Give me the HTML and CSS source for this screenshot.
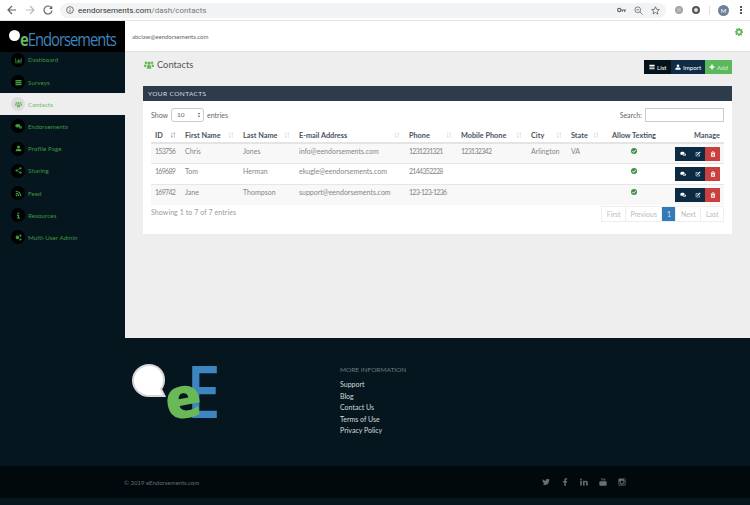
FILE: index.html
```html
<!DOCTYPE html>
<html lang="en">
<head>
    <meta charset="UTF-8">
    <meta name="viewport" content="width=device-width, initial-scale=1.0">
    <title>Contacts</title>
    <link rel="stylesheet" href="styles.css">
</head>
<body>

    <svg class="sprite" xmlns="http://www.w3.org/2000/svg">
        <symbol id="i-chart" viewBox="0 0 16 16"><path d="M1 2h1.500v11H15v1.500H1zM4 8h2v4H4zM7 5h2v7H7zM10 7h2v5h-2zM13 3h2v9h-2z"/></symbol>
        <symbol id="i-list" viewBox="0 0 16 16"><path d="M1 2h14v3H1zM1 6.500h14v3H1zM1 11h14v3H1z"/></symbol>
        <symbol id="i-users" viewBox="0 0 16 16"><circle cx="8" cy="5" r="2.600"/><circle cx="3" cy="4.500" r="2"/><circle cx="13" cy="4.500" r="2"/><path d="M4.500 14V10.500c0-1.700 1.200-2.500 3.500-2.500s3.500.8 3.500 2.500V14zM0 11V9c0-1.300 1-2 3-2 .5 0 .9 0 1.300.2-.7.600-1 1.500-1 2.800v1zM16 11V9c0-1.300-1-2-3-2-.5 0-.9 0-1.300.2.700.6 1 1.500 1 2.800v1z"/></symbol>
        <symbol id="i-comments" viewBox="0 0 16 16"><path d="M6.500 2C3 2 .5 3.800.5 6c0 1.200.7 2.200 1.900 3L1.500 11l2.700-1.300c.7.200 1.500.3 2.300.3 3.500 0 6-1.800 6-4s-2.500-4-6-4z"/><path d="M13.500 6.500c0 2.500-2.600 4.400-6 4.500.9.900 2.300 1.500 4 1.500.5 0 1 0 1.400-.2l2.100 1.200-.6-1.800c.9-.7 1.500-1.500 1.500-2.500 0-1-.9-1.800-2.400-2.700z"/></symbol>
        <symbol id="i-user" viewBox="0 0 16 16"><circle cx="8" cy="4.500" r="3.500"/><path d="M1.500 14.500v-2c0-2.200 2-3.500 4-3.500h5c2 0 4 1.300 4 3.500v2z"/></symbol>
        <symbol id="i-share" viewBox="0 0 16 16"><circle cx="12.500" cy="3" r="2.500"/><circle cx="12.500" cy="13" r="2.500"/><circle cx="3.500" cy="8" r="2.500"/><path d="M3 7.300l9-5 .8 1.400-9 5zM3.800 7.300l9 5-.8 1.400-9-5z"/></symbol>
        <symbol id="i-rss" viewBox="0 0 16 16"><circle cx="3.500" cy="12.500" r="2"/><path d="M1.500 6v2.500a6 6 0 0 1 6 6H10A8.500 8.500 0 0 0 1.500 6z"/><path d="M1.500 1.500V4A10.500 10.500 0 0 1 12 14.500h2.500a13 13 0 0 0-13-13z"/></symbol>
        <symbol id="i-info" viewBox="0 0 16 16"><path d="M6 1.500h3.500v3H6zM4.500 6.500h5v6h2v2.500h-7v-2.500h2V9h-2z"/></symbol>
        <symbol id="i-cogs" viewBox="0 0 16 16"><path d="M5.500 3l1 1.200 1.600-.2.400 1.500 1.300.9-.7 1.400.7 1.400-1.300.9-.4 1.500-1.600-.2-1 1.200-1-1.200-1.600.2-.4-1.500L1.200 9.200l.7-1.400-.7-1.400L2.500 5.500l.4-1.500 1.600.2z"/><circle cx="12.500" cy="3.500" r="2.500"/><circle cx="12.500" cy="12.500" r="2.500"/></symbol>
        <symbol id="i-upload" viewBox="0 0 16 16"><circle cx="8" cy="4.500" r="3.500"/><path d="M1 15v-2.500C1 10.500 3 9 5 9h6c2 0 4 1.500 4 3.500V15z"/></symbol>
        <symbol id="i-plus" viewBox="0 0 16 16"><path d="M6 1.500h4V6h4.500v4H10v4.500H6V10H1.500V6H6z"/></symbol>
        <symbol id="i-edit" viewBox="0 0 16 16"><path d="M2 3h7v1.500H3.500v8h8V9H13v5H2z"/><path d="M6 8l7-7 2 2-7 7-2.500.5z"/></symbol>
        <symbol id="i-trash" viewBox="0 0 16 16"><path d="M5.500 1h5l.5 1.500h3V4H2V2.500h3zM3 5h10v10H3zM5.500 7v6h1V7zM7.500 7v6h1V7zM9.500 7v6h1V7z"/></symbol>
        <symbol id="i-check" viewBox="0 0 16 16"><path fill-rule="evenodd" d="M8 0a8 8 0 1 1 0 16A8 8 0 0 1 8 0zm4 4.500L6.700 9.800 4.300 7.400 2.800 8.900l3.900 3.900 6.800-6.800z"/></symbol>
        <symbol id="i-sort" viewBox="0 0 10 10"><path d="M2.500 1v6H1l2 2.500L5 7H3.500V1zM7 .5L5 3h1.500v6.500h1V3H9z"/></symbol>
        <symbol id="i-twitter" viewBox="0 0 16 16"><path d="M15.500 3.200c-.6.300-1.200.4-1.800.5.600-.4 1.100-1 1.400-1.700-.6.400-1.300.6-2 .8A3.100 3.100 0 0 0 7.800 5.600 8.900 8.900 0 0 1 1.400 2.300a3.100 3.100 0 0 0 1 4.200c-.5 0-1-.2-1.400-.4 0 1.500 1.100 2.800 2.500 3.100-.5.100-.9.100-1.400 0 .4 1.200 1.500 2.100 2.900 2.200A6.300 6.300 0 0 1 .5 12.700 8.900 8.900 0 0 0 14.200 4.800c.5-.4 1-.9 1.300-1.600z"/></symbol>
        <symbol id="i-facebook" viewBox="0 0 16 16"><path d="M9.500 16V9h2.400l.4-2.800H9.500V4.500c0-.8.200-1.300 1.400-1.300h1.500V.7C12.100.6 11.300.500 10.300.500 8.200.5 6.700 1.800 6.700 4.200v2H4.300V9h2.400v7z"/></symbol>
        <symbol id="i-linkedin" viewBox="0 0 16 16"><path d="M.5 5.500h3.200V15H.5zM2.100 1a1.700 1.700 0 1 1 0 3.400 1.700 1.700 0 0 1 0-3.400zM6 5.500h3v1.300c.5-.9 1.500-1.500 2.900-1.500 2.800 0 3.600 1.800 3.600 4.300V15h-3.200v-4.800c0-1.200-.2-2.200-1.500-2.200s-1.600 1-1.600 2.200V15H6z"/></symbol>
        <symbol id="i-youtube" viewBox="0 0 16 16"><path d="M3.500 0h1l.7 2 .7-2h1L6 3.200V5H5V3.200zM8.300 1.200c.7 0 1.100.5 1.100 1.200v1.500c0 .7-.4 1.200-1.100 1.200s-1.100-.5-1.100-1.200V2.400c0-.7.4-1.200 1.100-1.200zM10 1.300h1v3c0 .3.300.3.600 0v-3h1V5h-1v-.4c-.7.700-1.600.6-1.600-.3z"/><path d="M2.500 6.500h11c1 0 1.800.8 1.800 1.800v5.400c0 1-.8 1.800-1.800 1.800h-11c-1 0-1.800-.8-1.800-1.800V8.300c0-1 .8-1.800 1.800-1.800z"/></symbol>
        <symbol id="i-instagram" viewBox="0 0 16 16"><path fill-rule="evenodd" d="M3 1h10a2 2 0 0 1 2 2v10a2 2 0 0 1-2 2H3a2 2 0 0 1-2-2V3a2 2 0 0 1 2-2zm8.500 1.500v2.500H14V2.500zM8 5a3 3 0 1 0 0 6 3 3 0 0 0 0-6zM2.500 7v6c0 .3.200.5.500.5h10c.3 0 .5-.2.500-.5V7h-1.200a4.500 4.500 0 1 1-8.600 0z"/></symbol>
    </svg>

    <!-- browser toolbar -->
    <div class="chrome">
        <svg class="chrome-icon" width="10" height="10" viewBox="0 0 10 10"><path d="M9 5H1.500M5 1L1 5l4 4" fill="none" stroke="#666" stroke-width="1.200"/></svg>
        <svg class="chrome-icon" width="10" height="10" viewBox="0 0 10 10"><path d="M1 5h7.500M5 1l4 4-4 4" fill="none" stroke="#bbb" stroke-width="1.200"/></svg>
        <svg class="chrome-icon" width="10" height="10" viewBox="0 0 10 10"><path d="M8.500 3A4 4 0 1 0 9 5.500" fill="none" stroke="#666" stroke-width="1.200"/><path d="M9.300 .8v3.200H6z" fill="#666"/></svg>
        <div class="omnibox">
            <svg width="8" height="8" viewBox="0 0 10 10"><circle cx="5" cy="5" r="4.200" fill="none" stroke="#555"/><path d="M4.500 4.500h1v3h-1zM4.500 2.500h1v1h-1z" fill="#555"/></svg>
            <span class="url">eendorsements.com<span class="url-path">/dash/contacts</span></span>
            <div class="omni-actions">
                <svg width="9" height="6" viewBox="0 0 12 8"><circle cx="3" cy="4" r="2.200" fill="none" stroke="#666" stroke-width="1.500"/><path d="M5 3.300h7v1.500h-1v2H9.500v-2H8v1.500H6.800V4.800H5z" fill="#666"/></svg>
                <svg width="9" height="9" viewBox="0 0 10 10"><circle cx="4.200" cy="4.200" r="3.200" fill="none" stroke="#777"/><path d="M6.500 6.500L9.500 9.500M2.700 4.200h3" stroke="#777" fill="none"/></svg>
                <svg width="9" height="9" viewBox="0 0 12 12"><path d="M6 1l1.500 3.400 3.700.4-2.800 2.500.8 3.700L6 8.700l-3.200 1.800.8-3.700L.8 4.800l3.700-.4z" fill="none" stroke="#555"/></svg>
            </div>
        </div>
        <div class="ext-icons">
            <span class="ext ext-grey"></span>
            <span class="ext ext-dark"></span>
            <span class="chrome-sep"></span>
            <span class="avatar">M</span>
            <span class="dots"><i></i><i></i><i></i></span>
        </div>
    </div>

    <div class="app">
        <div class="sidebar">
            <div class="brand">
                <span class="brand-bubble"></span>
                <span class="brand-name"><span class="brand-e">e</span>Endorsements</span>
            </div>
            <ul class="side-nav">
                <li><span class="nav-icon"><svg><use href="#i-chart"/></svg></span>Dashboard</li>
                <li><span class="nav-icon"><svg><use href="#i-list"/></svg></span>Surveys</li>
                <li class="active"><span class="nav-icon"><svg><use href="#i-users"/></svg></span>Contacts</li>
                <li><span class="nav-icon"><svg><use href="#i-comments"/></svg></span>Endorsements</li>
                <li><span class="nav-icon"><svg><use href="#i-user"/></svg></span>Profile Page</li>
                <li><span class="nav-icon"><svg><use href="#i-share"/></svg></span>Sharing</li>
                <li><span class="nav-icon"><svg><use href="#i-rss"/></svg></span>Feed</li>
                <li><span class="nav-icon"><svg><use href="#i-info"/></svg></span>Resources</li>
                <li><span class="nav-icon"><svg><use href="#i-cogs"/></svg></span>Multi-User Admin</li>
            </ul>
        </div>

        <div class="main">
            <div class="topbar">
                <span class="account">abclaw@eendorsements.com</span>
                <svg class="gear" width="8" height="8" viewBox="0 0 16 16"><path fill-rule="evenodd" d="M6.500 0h3l.4 2.200 1.500.6L13.200 1.500l2.100 2.100-1.300 1.800.6 1.500L16 6.500v3l-2.200.4-.6 1.500 1.300 1.800-2.100 2.100-1.800-1.300-1.500.6L9.500 16h-3l-.4-2.200-1.500-.6-1.800 1.300L.7 12.400 2 10.600l-.6-1.500L0 9.500v-3l2.200-.4.6-1.500L1.500 2.800 3.600.7l1.800 1.300 1.500-.6zM8 5a3 3 0 1 0 0 6 3 3 0 0 0 0-6z"/></svg>
            </div>

            <div class="content">
                <div class="page-head">
                    <h2><svg class="title-icon"><use href="#i-users"/></svg>Contacts</h2>
                    <div class="btn-group">
                        <span class="btn btn-black"><svg><use href="#i-list"/></svg>List</span>
                        <span class="btn btn-navy"><svg><use href="#i-upload"/></svg>Import</span>
                        <span class="btn btn-green"><svg><use href="#i-plus"/></svg>Add</span>
                    </div>
                </div>

                <div class="panel">
                    <div class="panel-head">YOUR CONTACTS</div>
                    <div class="panel-body">
                        <div class="table-tools">
                            <div class="length">Show <span class="select">10<span class="select-arrows"></span></span> entries</div>
                            <div class="search">Search: <span class="search-box"></span></div>
                        </div>

                        <table class="contacts">
                            <thead>
                                <tr>
                                    <th class="col-id">ID<svg class="sort sort-on"><use href="#i-sort"/></svg></th>
                                    <th class="col-first">First Name<svg class="sort"><use href="#i-sort"/></svg></th>
                                    <th class="col-last">Last Name<svg class="sort"><use href="#i-sort"/></svg></th>
                                    <th class="col-email">E-mail Address<svg class="sort"><use href="#i-sort"/></svg></th>
                                    <th class="col-phone">Phone<svg class="sort"><use href="#i-sort"/></svg></th>
                                    <th class="col-mobile">Mobile Phone<svg class="sort"><use href="#i-sort"/></svg></th>
                                    <th class="col-city">City<svg class="sort"><use href="#i-sort"/></svg></th>
                                    <th class="col-state">State<svg class="sort"><use href="#i-sort"/></svg></th>
                                    <th class="col-text">Allow Texting</th>
                                    <th class="col-manage">Manage</th>
                                </tr>
                            </thead>
                            <tbody>
                                <tr>
                                    <td class="num">153756</td><td>Chris</td><td>Jones</td><td>info@eendorsements.com</td><td class="num">1231231321</td><td class="num">123132342</td><td>Arlington</td><td>VA</td>
                                    <td class="col-text"><svg class="check"><use href="#i-check"/></svg></td>
                                    <td class="col-manage"><div class="row-btns"><span class="rb rb-navy"><svg><use href="#i-comments"/></svg></span><span class="rb rb-navy"><svg><use href="#i-edit"/></svg></span><span class="rb rb-red"><svg><use href="#i-trash"/></svg></span></div></td>
                                </tr>
                                <tr>
                                    <td class="num">169689</td><td>Tom</td><td>Herman</td><td>ekugle@eendorsements.com</td><td class="num">2144352228</td><td></td><td></td><td></td>
                                    <td class="col-text"><svg class="check"><use href="#i-check"/></svg></td>
                                    <td class="col-manage"><div class="row-btns"><span class="rb rb-navy"><svg><use href="#i-comments"/></svg></span><span class="rb rb-navy"><svg><use href="#i-edit"/></svg></span><span class="rb rb-red"><svg><use href="#i-trash"/></svg></span></div></td>
                                </tr>
                                <tr>
                                    <td class="num">169742</td><td>Jane</td><td>Thompson</td><td>support@eendorsements.com</td><td class="num">123-123-1236</td><td></td><td></td><td></td>
                                    <td class="col-text"><svg class="check"><use href="#i-check"/></svg></td>
                                    <td class="col-manage"><div class="row-btns"><span class="rb rb-navy"><svg><use href="#i-comments"/></svg></span><span class="rb rb-navy"><svg><use href="#i-edit"/></svg></span><span class="rb rb-red"><svg><use href="#i-trash"/></svg></span></div></td>
                                </tr>
                            </tbody>
                        </table>

                        <div class="table-foot">
                            <span class="table-info">Showing 1 to 7 of 7 entries</span>
                            <div class="pager">
                                <span>First</span><span>Previous</span><span class="current">1</span><span>Next</span><span>Last</span>
                            </div>
                        </div>
                    </div>
                </div>
            </div>
        </div>
    </div>

    <div class="footer">
        <div class="footer-top">
            <svg class="footer-logo" width="104" height="102" viewBox="0 0 104 102">
                <path d="M18 27c8.500 0 15 6.500 15 15 0 3.500-1 6.500-3 9l3.500 7H18C9.500 58 2 51 2 42.500S9.500 27 18 27z" fill="#fff" stroke="#d8d8dc" stroke-width="2"/>
                <text x="55.500" y="80" class="logo-big-e" textLength="34" lengthAdjust="spacingAndGlyphs">E</text>
                <text x="34" y="80" class="logo-small-e" textLength="37" lengthAdjust="spacingAndGlyphs" transform="rotate(-10 52 64)">e</text>
            </svg>
            <div class="footer-links">
                <h4>MORE INFORMATION</h4>
                <a>Support</a>
                <a>Blog</a>
                <a>Contact Us</a>
                <a>Terms of Use</a>
                <a>Privacy Policy</a>
            </div>
        </div>
        <div class="footer-bar">
            <span>&copy; 2019 eEndorsements.com</span>
            <div class="social">
                <svg><use href="#i-twitter"/></svg>
                <svg><use href="#i-facebook"/></svg>
                <svg><use href="#i-linkedin"/></svg>
                <svg><use href="#i-youtube"/></svg>
                <svg><use href="#i-instagram"/></svg>
            </div>
        </div>
    </div>

</body>
</html>
```

FILE: styles.css
```css
* {
    box-sizing: border-box;
}

body {
    font-family: Lato, "Open Sans", sans-serif;
    background-color: #05161e;
    margin: 0;
    font-size: 7px;
    color: #555;
    overflow: hidden;
}

.sprite {
    display: none;
}

/* browser toolbar */
.chrome {
    height: 21px;
    background: #fff;
    border-bottom: 1px solid #e4e4e4;
    display: flex;
    align-items: center;
    padding: 0 0 0 7px;
}

.chrome-icon {
    margin-right: 8px;
    flex: none;
}

.omnibox {
    width: 606px;
    height: 15px;
    margin-left: -1px;
    background: #f1f3f4;
    border-radius: 8px;
    display: flex;
    align-items: center;
    padding: 0 6px 0 6px;
    flex: none;
}

.url {
    font-family: Roboto, sans-serif;
    font-size: 8px;
    color: #333;
    margin-left: 4px;
}

.url-path {
    color: #777;
}

.omni-actions {
    margin-left: auto;
    display: flex;
    align-items: center;
    gap: 8px;
}

.ext-icons {
    display: flex;
    align-items: center;
    margin-left: 9px;
}

.ext {
    width: 8px;
    height: 8px;
    border-radius: 50%;
    margin-right: 9px;
}

.ext-grey {
    background: #bbb;
    border: 2px solid #a5a5a5;
}

.ext-dark {
    background: #e0e0e0;
    border: 2px solid #555;
}

.chrome-sep {
    width: 1px;
    height: 9px;
    background: #ddd;
    margin-right: 8px;
}

.avatar {
    width: 11px;
    height: 11px;
    border-radius: 50%;
    background: #6d8299;
    color: #fff;
    font-size: 6px;
    text-align: center;
    line-height: 11px;
    margin-right: 11px;
}

.dots {
    display: flex;
    flex-direction: column;
    gap: 1.500px;
}

.dots i {
    width: 1.500px;
    height: 1.500px;
    background: #555;
}

/* app */
.app {
    display: flex;
    height: 317px;
}

.sidebar {
    width: 125px;
    background: #05161e;
    flex: none;
}

.brand {
    height: 31px;
    background: #000;
    position: relative;
    display: flex;
    align-items: center;
    padding-left: 20px;
}

.brand-bubble {
    position: absolute;
    left: 9px;
    top: 9px;
    width: 11px;
    height: 11px;
    background: #fff;
    border-radius: 50%;
}

.brand-name {
    font-family: "Open Sans", sans-serif;
    font-size: 18px;
    letter-spacing: -1.200px;
    color: #3c85bf;
    white-space: nowrap;
    font-weight: 400;
    padding-top: 4px;
    transform: scaleX(.82);
    transform-origin: left center;
}

.brand-e {
    color: #69b958;
    font-weight: 700;
}

.side-nav {
    list-style: none;
    margin: 0;
    padding: 0;
}

.side-nav li {
    height: 22.200px;
    display: flex;
    align-items: center;
    padding-left: 11px;
    color: #3f9a41;
    font-size: 6.200px;
    letter-spacing: .1px;
}

.side-nav li:first-child {
    height: 19px;
    align-items: flex-start;
    padding-top: 1px;
    line-height: 14px;
}

.side-nav li.active {
    background: #eee;
    color: #6cb85f;
    width: 125px;
}

.nav-icon {
    width: 14px;
    height: 14px;
    border-radius: 50%;
    background: #000;
    margin-right: 3px;
    display: flex;
    align-items: center;
    justify-content: center;
    flex: none;
}

.active .nav-icon {
    background: #ddd;
}

.nav-icon svg {
    width: 7px;
    height: 7px;
    fill: #3f9a41;
}

.active .nav-icon svg {
    fill: #6cb85f;
}

.main {
    flex: 1;
    background: #eee;
    min-width: 0;
}

.topbar {
    height: 31px;
    background: #fff;
    border-bottom: 1px solid #e2e2e2;
    display: flex;
    justify-content: space-between;
    align-items: center;
    padding: 1px 7px 0 7px;
    color: #666;
    font-size: 6px;
}

.gear {
    fill: #5cb85c;
    margin-top: -9px;
}

.content {
    padding: 8px 18px 0 18px;
}

.page-head {
    display: flex;
    justify-content: space-between;
    align-items: flex-start;
    height: 26px;
}

.page-head h2 {
    margin: 0;
    font-size: 9.300px;
    font-weight: 400;
    color: #555;
    display: flex;
    align-items: center;
    height: 9px;
}

.title-icon {
    width: 10px;
    height: 10px;
    fill: #69b958;
    margin-right: 3px;
    margin-left: 1px;
}

.btn-group {
    display: flex;
    height: 14px;
}

.btn {
    display: flex;
    align-items: center;
    color: #fff;
    font-size: 6.200px;
    padding: 0 0 0 4px;
    white-space: nowrap;
}

.btn svg {
    width: 6px;
    height: 6px;
    fill: #fff;
    margin-right: 2px;
    flex: none;
}

.btn-black {
    background: #04121a;
    width: 27px;
    padding-left: 5px;
}

.btn-navy {
    background: #0f2b46;
    width: 34px;
}

.btn-green {
    background: #5cb85c;
    width: 27px;
    color: #d6ecd6;
}

.panel {
    background: #fff;
    width: 589px;
    height: 148px;
}

.panel-head {
    height: 15px;
    background: #2e3b4b;
    color: #d8dde2;
    font-size: 6.500px;
    letter-spacing: .4px;
    line-height: 15px;
    padding-left: 5px;
}

.panel-body {
    padding: 7px 8px 0 8px;
}

.table-tools {
    display: flex;
    justify-content: space-between;
    align-items: center;
    height: 14px;
}

.length,
.search {
    display: flex;
    align-items: center;
    color: #666;
    font-size: 7px;
    gap: 3px;
}

.select {
    width: 33px;
    height: 14px;
    border: 1px solid #ccc;
    border-radius: 3px;
    font-size: 6.500px;
    line-height: 12px;
    padding-left: 5px;
    position: relative;
}

.select-arrows {
    position: absolute;
    right: 3px;
    top: 4px;
    width: 0;
    height: 4px;
    border-left: 1.500px solid transparent;
    border-right: 1.500px solid transparent;
    border-top: 2px solid #666;
    border-bottom: 2px solid #666;
}

.search-box {
    width: 79px;
    height: 14px;
    border: 1px solid #ccc;
}

.contacts {
    margin-top: 6px;
    width: 573px;
    border-collapse: collapse;
    table-layout: fixed;
    font-size: 7px;
}

.contacts th {
    height: 15px;
    text-align: left;
    font-size: 7.300px;
    font-weight: 700;
    color: #4a5260;
    border-bottom: 2px solid #e4e4e4;
    padding: 0 0 0 4px;
    position: relative;
    white-space: nowrap;
}

.contacts td {
    height: 20.500px;
    padding: 0 0 5px 4px;
    color: #858585;
    border-bottom: 1px solid #e6e6e6;
    white-space: nowrap;
}

.contacts td.num {
    letter-spacing: -.7px;
}

.contacts tbody tr:nth-child(odd) {
    background: #f8f8f8;
}

.contacts tbody tr:last-child td {
    border-bottom: none;
}

.col-id { width: 30px; }
.col-first { width: 58px; }
.col-last { width: 56px; }
.col-email { width: 110px; }
.col-phone { width: 52px; }
.col-mobile { width: 70px; }
.col-city { width: 40px; }
.col-state { width: 37px; }
.col-text { width: 56px; }
.col-manage { width: 64px; }

.contacts .col-text {
    text-align: center;
}

.contacts .col-manage {
    text-align: right;
    padding-right: 4px;
}

.contacts td.col-manage {
    padding-bottom: 0;
}

.sort {
    position: absolute;
    right: 5px;
    top: 4px;
    width: 6px;
    height: 6px;
    fill: #d5d8dc;
}

.sort-on {
    fill: #9aa3ad;
}

.check {
    width: 6px;
    height: 6px;
    fill: #3f8f45;
}

.row-btns {
    display: inline-flex;
    vertical-align: middle;
}

.rb {
    width: 15px;
    height: 14px;
    display: flex;
    align-items: center;
    justify-content: center;
}

.rb svg {
    width: 6px;
    height: 6px;
    fill: #fff;
}

.rb-navy {
    background: #0c2a42;
}

.rb-red {
    background: #c9403f;
}

.table-foot {
    display: flex;
    justify-content: space-between;
    align-items: flex-start;
    margin-top: 1px;
}

.table-info {
    color: #999;
    padding-top: 2px;
    letter-spacing: .08px;
}

.pager {
    display: flex;
    border: 1px solid #eee;
    height: 16px;
}

.pager span {
    padding: 0 4.500px;
    line-height: 14px;
    color: #bbb;
    border-left: 1px solid #eee;
}

.pager span:first-child {
    border-left: none;
}

.pager .current {
    background: #337ab7;
    color: #cfe0ef;
}

/* footer */
.footer {
    height: 167px;
    background: #05161e;
}

.footer-top {
    height: 128px;
    display: flex;
    padding-left: 131px;
}

.footer-logo {
    flex: none;
}

.logo-big-e {
    font-family: "Open Sans", sans-serif;
    font-size: 73px;
    font-weight: 600;
    fill: #3c85bf;
}

.logo-small-e {
    font-family: "Open Sans", sans-serif;
    font-size: 57px;
    font-weight: 800;
    fill: #69b958;
}

.footer-links {
    margin: 26px 0 0 105px;
    display: flex;
    flex-direction: column;
    color: #d5dadc;
    font-size: 7px;
}

.footer-links h4 {
    margin: 0 0 4px 0;
    font-weight: 400;
    font-size: 6.500px;
    color: #6f7b80;
    line-height: 11px;
}

.footer-links a {
    line-height: 11.500px;
}

.footer-bar {
    height: 32px;
    background: #02090d;
    display: flex;
    align-items: center;
    justify-content: space-between;
    padding: 0 124px 0 124px;
    color: #666c70;
    font-size: 6px;
}

.social {
    display: flex;
    gap: 11px;
    align-items: center;
}

.social svg {
    width: 8px;
    height: 8px;
    fill: #6b6f72;
}
```
